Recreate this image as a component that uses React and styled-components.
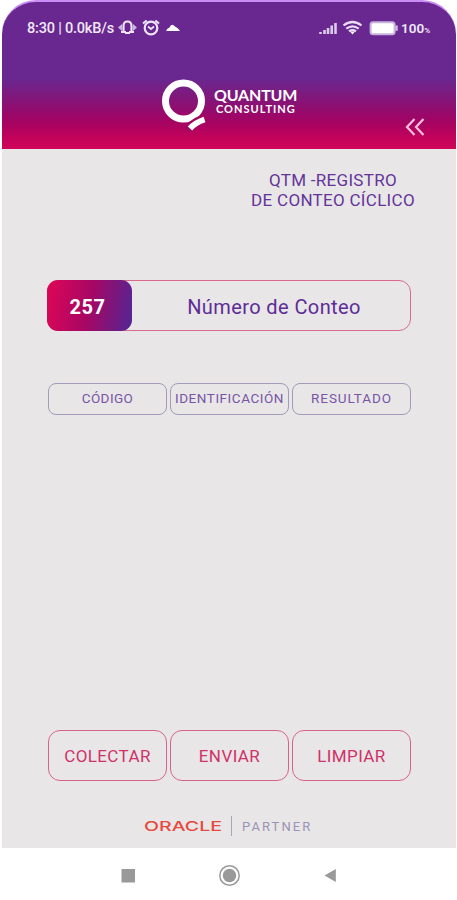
import React from 'react';
import styled, { createGlobalStyle } from 'styled-components';

const columns = [
    { label: 'CÓDIGO', spacing: '0.4px' },
    { label: 'IDENTIFICACIÓN', spacing: '0.55px' },
    { label: 'RESULTADO', spacing: '0.9px' },
];
const actions = ['COLECTAR', 'ENVIAR', 'LIMPIAR'];

function StatusIcons() {
    return (
        <svg width="64" height="18" viewBox="0 0 64 18" fill="none" stroke="#eee3f7">
            <path d="M0 8.500L4 5V12ZM19 8.500L15 5V12Z" fill="#cdb5e2" stroke="none" />
            <path d="M5.500 12.500V7Q5.500 2.500 9.500 2.500T13.500 7V12.500M3 13H8M11 13H16" strokeWidth="2.200" />
            <path d="M7 14H12" strokeWidth="2" />
            <circle cx="33" cy="9" r="6.300" strokeWidth="2.200" />
            <path d="M25 4.500L28.700 1.500M41 4.500L37.300 1.500" strokeWidth="2.200" />
            <path d="M30 7.500L33 10L36 7.500" strokeWidth="1.800" />
            <path d="M48 12Q49 9 51.500 8.500Q53.500 3.500 57 7.500Q60 8.500 62 12Z" fill="#fff" stroke="none" />
        </svg>
    );
}

function SignalIcons() {
    return (
        <svg width="81" height="18" viewBox="0 0 81 18" fill="none">
            <path d="M3.500 15V13M7.500 15V11M11 15V9M14.700 15V6.500M18.500 15V4" stroke="#dccbea" strokeWidth="2.600" />
            <path d="M26.500 6.500Q35.500 -0.500 44.500 6.500M29.300 9.600Q35.500 5 41.700 9.600M32 12.400Q35.500 10 39 12.400" stroke="#e9dcf4" strokeWidth="2.200" />
            <path d="M33 12.500H38L35.500 15.500Z" fill="#fff" />
            <rect x="53.600" y="3.200" width="24" height="12" rx="2.500" fill="#fff" stroke="#c8b4db" strokeWidth="2" />
            <path d="M79.500 6.500V11.800" stroke="#cdb9df" strokeWidth="2.500" />
        </svg>
    );
}

function LogoMark() {
    return (
        <svg width="46" height="54" viewBox="0 0 46 54" fill="none" stroke="#fff">
            <circle cx="22.500" cy="22" r="18" strokeWidth="7" />
            <path d="M28 49C32 44 37 41 45 39" stroke="#a10861" strokeWidth="8" strokeLinecap="round" />
            <path d="M29 49.500C32.500 45.500 37.500 42.500 43.500 40.500" strokeWidth="5.800" />
        </svg>
    );
}

function App() {
    return (
        <Phone>
            <GlobalStyle />
            <Header>
                <StatusBar>
                    <StatusSide>
                        <Clock>8:30 | 0.0kB/s</Clock>
                        <StatusIcons />
                    </StatusSide>
                    <StatusSide>
                        <SignalIcons />
                        <Battery>100<small>%</small></Battery>
                    </StatusSide>
                </StatusBar>
                <Brand>
                    <LogoMark />
                    <BrandName>
                        <strong>QUANTUM</strong>
                        <span>CONSULTING</span>
                    </BrandName>
                </Brand>
                <BackButton aria-label="Volver">
                    <svg width="20" height="18" viewBox="0 0 20 18" fill="none" stroke="#f5bfdc" strokeWidth="2.200">
                        <path d="M9.500 1L2 9L9.500 17M18.500 1L11 9L18.500 17" />
                    </svg>
                </BackButton>
            </Header>
            <Content>
                <Title>QTM -REGISTRO<br />DE CONTEO CÍCLICO</Title>
                <CountField>
                    <CountValue>257</CountValue>
                    <CountLabel>Número de Conteo</CountLabel>
                </CountField>
                <Columns>
                    {columns.map(({ label, spacing }) => (
                        <ColumnHead key={label} $spacing={spacing}>{label}</ColumnHead>
                    ))}
                </Columns>
                <Actions>
                    {actions.map((label) => (
                        <ActionButton key={label}>{label}</ActionButton>
                    ))}
                </Actions>
                <Footer>
                    <Oracle viewBox="0 0 80 20">
                        <text x="0" y="15" textLength="78" lengthAdjust="spacingAndGlyphs">ORACLE</text>
                    </Oracle>
                    <Partner>PARTNER</Partner>
                </Footer>
            </Content>
            <NavBar>
                <svg width="216" height="24" viewBox="0 0 216 24" fill="#999">
                    <rect x="1.500" y="5" width="13.500" height="13.500" />
                    <circle cx="109.500" cy="11.500" r="9.700" fill="none" stroke="#999" strokeWidth="1.500" />
                    <circle cx="109.500" cy="11.500" r="6.700" />
                    <path d="M204.500 11.500L215.800 5V18Z" />
                </svg>
            </NavBar>
        </Phone>
    );
}

const GlobalStyle = createGlobalStyle`
    * {
        box-sizing: border-box;
    }
    body {
        margin: 0;
        background: #fff;
        font-family: Roboto, "Liberation Sans", sans-serif;
    }
    button {
        font-family: inherit;
        padding: 0;
        background: none;
    }
`;

const Phone = styled.div`
    width: 457px;
    height: 900px;
    display: flex;
    flex-direction: column;
    padding: 0 1px 0 2px;
`;

const Header = styled.header`
    height: 149px;
    flex: none;
    display: flex;
    flex-direction: column;
    border-top: 2px solid #c98df5;
    border-radius: 34px 34px 0 0;
    background: linear-gradient(180deg, #682890 0, #682890 76px, #7c1b7f 91px, #900d70 106px, #a60361 121px, #c3025b 136px, #cf0658 147px);
`;

const StatusBar = styled.div`
    display: flex;
    justify-content: space-between;
    padding: 17px 24px 0 25px;
    height: 36px;
    color: #f0e7f7;
`;

const StatusSide = styled.div`
    display: flex;
    align-items: center;
    gap: 3px;
    height: 18px;
`;

const Clock = styled.span`
    font-size: 14.500px;
    font-weight: 500;
    letter-spacing: -0.2px;
    width: 88px;
    white-space: nowrap;
`;

const Battery = styled.span`
    font-size: 13.500px;
    font-weight: 600;
    width: 31px;
    white-space: nowrap;

    small{
        font-size: 8px;
    }
`;

const Brand = styled.div`
    display: flex;
    height: 54px;
    margin: 41px 0 0 159px;
    gap: 7px;
`;

const BrandName = styled.div`
    display: flex;
    flex-direction: column;
    color: #fff;
    font-family: Lato, sans-serif;
    padding-top: 8px;

    strong{
        font-size: 16px;
        font-weight: 700;
        line-height: 15px;
        letter-spacing: -0.2px;
    }
    span{
        font-size: 11px;
        font-weight: 700;
        line-height: 13px;
        letter-spacing: 1px;
        padding-left: 2px;
    }
`;

const BackButton = styled.button`
    align-self: flex-end;
    width: 20px;
    height: 18px;
    margin: -15px 31px 0 0;
    border: 0;

    svg{
        display: block;
    }
`;

const Content = styled.main`
    height: 699px;
    flex: none;
    display: flex;
    flex-direction: column;
    padding: 21px 45px 0 45px;
    background: #e8e6e7;
`;

const Title = styled.h1`
    align-self: flex-end;
    width: 172px;
    margin: 0 -8px 0 0;
    text-align: center;
    white-space: nowrap;
    font-size: 17px;
    font-weight: 400;
    line-height: 20px;
    letter-spacing: 0.3px;
    color: #64349a;
`;

const CountField = styled.div`
    display: flex;
    height: 51px;
    margin-top: 70px;
    border: 1.500px solid #d96a8b;
    border-radius: 12px;
`;

const CountValue = styled.div`
    width: 85px;
    margin: -1px 0 -1px -1px;
    border-radius: 11px;
    display: flex;
    align-items: center;
    justify-content: center;
    padding: 2px 4px 0 0;
    background: linear-gradient(100deg, #d90658 5%, #a60764 50%, #552593 98%);
    color: #fff;
    font-size: 20px;
    font-weight: 700;
    letter-spacing: 0.5px;
`;

const CountLabel = styled.div`
    flex: 1;
    display: flex;
    align-items: center;
    justify-content: center;
    padding: 2px 0 0 6px;
    font-size: 20px;
    letter-spacing: 0.4px;
    color: #5d2c96;
`;

const Columns = styled.div`
    display: grid;
    grid-template-columns: repeat(3, 1fr);
    gap: 3px;
    margin: 52px 0 0 1px;
`;

const ColumnHead = styled.div`
    height: 32px;
    display: flex;
    align-items: center;
    justify-content: center;
    border: 1px solid #a39bb9;
    border-radius: 8px;
    font-size: 13.500px;
    letter-spacing: ${({ $spacing }) => $spacing};
    color: #7955a6;
    min-width: 0;
    padding-bottom: 2px;
    white-space: nowrap;
`;

const Actions = styled(Columns)`
    margin-top: 315px;
`;

const ActionButton = styled.button`
    height: 51px;
    border: 1.500px solid #d66488;
    border-radius: 12px;
    color: #cf3269;
    font-size: 17px;
    letter-spacing: 0.4px;
`;

const Footer = styled.div`
    display: flex;
    align-items: center;
    height: 20px;
    margin: 35px 0 0 97px;
`;

const Oracle = styled.svg`
    width: 80px;
    height: 20px;
    overflow: visible;

    text{
        font-family: Inter, "Liberation Sans", sans-serif;
        font-size: 13.500px;
        font-weight: 500;
        fill: #e64a3e;
    }
`;

const Partner = styled.span`
    height: 20px;
    line-height: 21px;
    margin-left: 7px;
    padding-left: 10px;
    border-left: 1.500px solid #aaa5bd;
    color: #9a94b3;
    font-size: 13px;
    letter-spacing: 2.1px;
`;

const NavBar = styled.nav`
    flex: 1;
    display: flex;
    justify-content: center;
    padding: 16px 2px 0 0;
    background: #fff;
`;

export default App;
